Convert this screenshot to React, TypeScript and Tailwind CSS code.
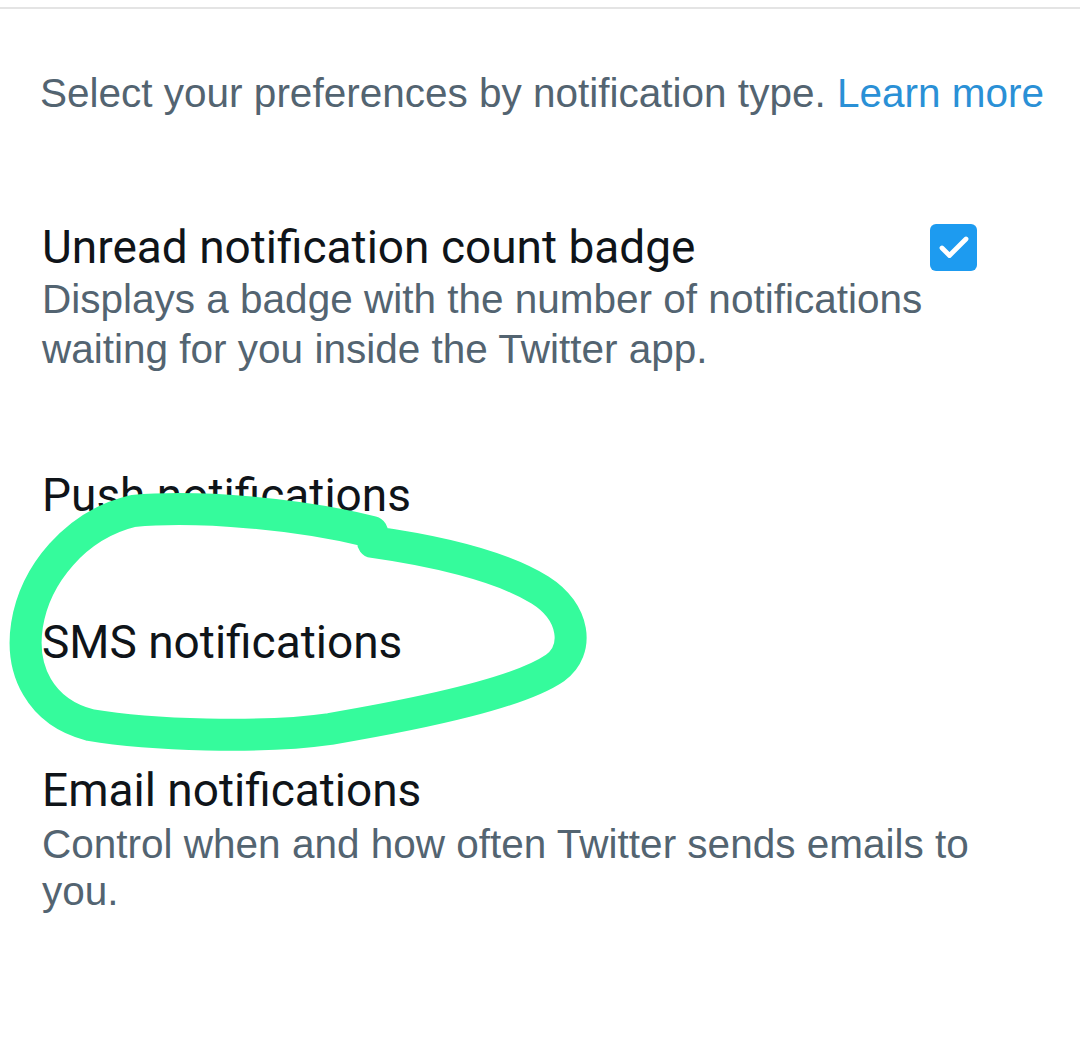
import { Check } from "lucide-react";

const sans = "font-['Roboto','Liberation_Sans',sans-serif]";
const gray = "font-['Liberation_Sans','Roboto',sans-serif]";

function Title({ children }: { children: string }) {
  return <div className={`${sans} text-[46px] leading-[52px] text-[#0f1419]`}>{children}</div>;
}

export default function App() {
  return (
    <div className="relative h-[1044px] w-[1080px] overflow-hidden bg-white">
      <div className="mt-[7px] h-[2px] bg-[#e4e4e4]" />
      <div className="px-[42px] pt-[60px]">
        <p className={`${gray} -ml-[2px] whitespace-nowrap text-[40.5px] leading-[48px] text-[#536471]`}>
          Select your preferences by notification type.{" "}
          <span className="text-[#2a90d6]">Learn more</span>
        </p>

        <div className="mt-[104px] flex items-start justify-between">
          <div>
            <Title>Unread notification count badge</Title>
            <div className={`${gray} mt-[1px] text-[40.5px] leading-[50px] text-[#536471]`}>
              <div>Displays a badge with the number of notifications</div>
              <div>waiting for you inside the Twitter app.</div>
            </div>
          </div>
          <div className="mr-[61px] mt-[3px] flex h-[47px] w-[47px] items-center justify-center rounded-[6px] bg-[#1d9bf0]">
            <Check className="h-[36px] w-[36px] text-white" strokeWidth={3.2} />
          </div>
        </div>

        <div className="mt-[95px]">
          <Title>Push notifications</Title>
        </div>

        <div className="mt-[95px]">
          <Title>SMS notifications</Title>
        </div>

        <div className="mt-[96px]">
          <Title>Email notifications</Title>
          <div className={`${gray} mt-[5px] text-[40.5px] leading-[47px] text-[#536471]`}>
            <div>Control when and how often Twitter sends emails to</div>
            <div>you.</div>
          </div>
        </div>
      </div>

      <svg className="absolute left-0 top-0" width="1080" height="1044" viewBox="0 0 1080 1044">
        <path
          d="M 373 542 C 430 550 500 565 540 590 C 575 612 580 650 555 668 C 520 692 430 712 330 729 C 260 739 150 735 90 725 C 40 712 20 670 27 625 C 35 575 75 525 133 511 C 200 505 300 514 372 532"
          fill="none"
          stroke="#35fb9c"
          strokeWidth="32"
          strokeLinecap="round"
          strokeLinejoin="round"
        />
      </svg>
    </div>
  );
}
